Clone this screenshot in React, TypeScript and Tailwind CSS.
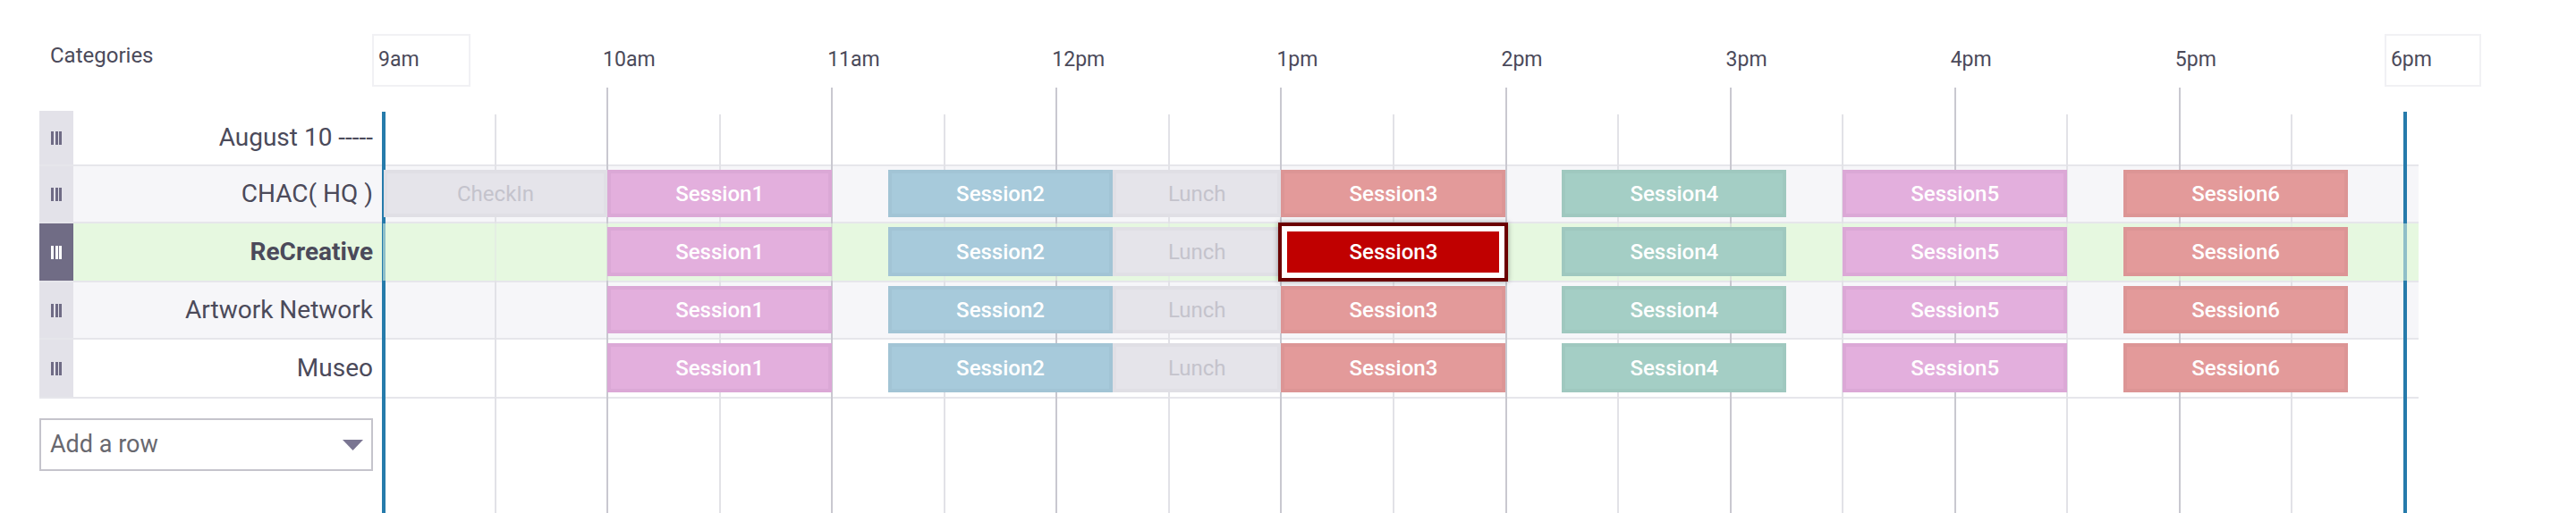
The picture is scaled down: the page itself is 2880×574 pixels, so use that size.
import React from "react";

const H = 251.1;
const hours = ["9am", "10am", "11am", "12pm", "1pm", "2pm", "3pm", "4pm", "5pm", "6pm"];

type Block = { name: string; s: number; e: number; kind: "pink" | "blue" | "red" | "teal" | "gray" };

const base: Block[] = [
  { name: "Session1", s: 1, e: 2, kind: "pink" },
  { name: "Session2", s: 2.25, e: 3.25, kind: "blue" },
  { name: "Lunch", s: 3.25, e: 4, kind: "gray" },
  { name: "Session3", s: 4, e: 5, kind: "red" },
  { name: "Session4", s: 5.25, e: 6.25, kind: "teal" },
  { name: "Session5", s: 6.5, e: 7.5, kind: "pink" },
  { name: "Session6", s: 7.75, e: 8.75, kind: "red" },
];

const rows = [
  { label: "August 10 -----", blocks: [] as Block[], bg: "bg-white", h: "h-[62px]" },
  { label: "CHAC( HQ )", blocks: [{ name: "CheckIn", s: 0, e: 1, kind: "gray" } as Block, ...base], bg: "bg-[#f6f6f9]", h: "h-[64px]" },
  { label: "ReCreative", blocks: base, bg: "bg-[#e6f8e0]", h: "h-[66px]", selected: true },
  { label: "Artwork Network", blocks: base, bg: "bg-[#f6f6f9]", h: "h-[64px]" },
  { label: "Museo", blocks: base, bg: "bg-white", h: "h-[66px]" },
];

const kindCls: Record<Block["kind"], string> = {
  pink: "bg-[#e3afdd] border-[#dba8d6] text-white font-medium",
  blue: "bg-[#a7cadb] border-[#a2c4d5] text-white font-medium",
  red: "bg-[#e39a9a] border-[#dc9595] text-white font-medium",
  teal: "bg-[#a4cec5] border-[#9fc8bf] text-white font-medium",
  gray: "bg-[#e5e4ea] border-[#e0dfe5] text-[#c4c3cc]",
};

function Handle({ dark }: { dark?: boolean }) {
  const bar = dark ? "bg-white" : "bg-[#6f6b85]";
  return (
    <div className={`w-[38px] h-full flex items-center justify-center gap-[1.5px] ${dark ? "bg-[#706c85]" : "bg-[#e3e2e9]"}`}>
      <span className={`w-[3px] h-[15px] ${bar}`} />
      <span className={`w-[3px] h-[15px] ${bar}`} />
      <span className={`w-[3px] h-[15px] ${bar}`} />
    </div>
  );
}

export default function App() {
  return (
    <div className="w-[2880px] h-[574px] bg-white relative overflow-hidden font-['Roboto',sans-serif] text-[#4b4a5a]">
      {/* grid lines */}
      <div className="absolute left-[428px] top-0 bottom-0 w-[2276px] z-[1] pointer-events-none">
        {hours.map((_, i) =>
          i === 0 || i === 9 ? (
            <div key={"h" + i} className="absolute top-[125px] bottom-0 w-[4px] bg-[#267bab]" style={{ left: i * H - 1 }} />
          ) : (
            <div key={"h" + i} className="absolute top-[98px] bottom-0 w-[2px] bg-[#c9c8d0]" style={{ left: i * H - 1 }} />
          )
        )}
        {Array.from({ length: 9 }).map((_, i) => (
          <div key={"m" + i} className="absolute top-[128px] bottom-0 w-[2px] bg-[#e2e2e7]" style={{ left: (i + 0.5) * H - 1 }} />
        ))}
      </div>

      <div className="pl-[44px]">
        {/* header */}
        <div className="h-[124px] flex">
          <div className="w-[384px] pl-3 pt-[48px] text-[24px] leading-[28px]">Categories</div>
          <div className="relative w-[2276px]">
            {hours.map((h, i) => (
              <div
                key={h}
                className={`absolute top-[38px] h-[59px] flex items-center pl-[5px] text-[23px] border-2 ${
                  i === 0 ? "w-[110px] border-[#f1f1f4]" : i === 9 ? "w-[108px] border-[#f1f1f4]" : "w-[109px] border-transparent"
                }`}
                style={{ left: i * H - (i === 9 ? 22 : 12) }}
              >
                {h}
              </div>
            ))}
          </div>
        </div>

        {/* rows */}
        {rows.map((r, ri) => (
          <div key={ri} className={`flex w-[2660px] ${r.h} ${r.bg} border-b-2 border-[#e6e6eb]`}>
            <Handle dark={r.selected} />
            <div className={`w-[346px] flex items-center justify-end pr-[11px] text-[28px] ${r.selected ? "font-bold" : ""}`}>
              {r.label}
            </div>
            <div className="relative flex-1">
              {r.selected && <div className="absolute inset-0 z-[1] bg-[#e6f8e0]/55" />}
              {r.blocks.map((b) => {
                const sel = r.selected && b.name === "Session3";
                if (sel) {
                  return (
                    <div
                      key={b.name}
                      className="absolute top-[-1px] bottom-[-1px] z-[3] border-[4px] border-[#6b0000] bg-white p-[6px] shadow-[0_0_6px_rgba(0,0,0,0.35)]"
                      style={{ left: b.s * H - 3, width: (b.e - b.s) * H + 6 }}
                    >
                      <div className="w-full h-full bg-[#c00000] flex items-center justify-center text-white text-[24px] font-medium">
                        {b.name}
                      </div>
                    </div>
                  );
                }
                return (
                  <div
                    key={b.name}
                    className={`absolute top-[4px] bottom-[5px] z-[2] border-[4px] flex items-center justify-center text-[24px] ${kindCls[b.kind]}`}
                    style={{ left: b.s * H + (b.s === 0 ? 1 : 0), width: (b.e - b.s) * H - (b.s === 0 ? 1 : 0) }}
                  >
                    {b.name}
                  </div>
                );
              })}
            </div>
          </div>
        ))}

        {/* add a row */}
        <div className="mt-[22px] w-[373px] h-[59px] border-2 border-[#c5c4cc] flex items-center justify-between pl-[10px] pr-[9px] bg-white">
          <span className="text-[27px] text-[#68686f]">Add a row</span>
          <svg width="23" height="12" viewBox="0 0 23 12">
            <polygon points="0,0 23,0 11.5,12" fill="#7a7592" />
          </svg>
        </div>
      </div>
    </div>
  );
}
